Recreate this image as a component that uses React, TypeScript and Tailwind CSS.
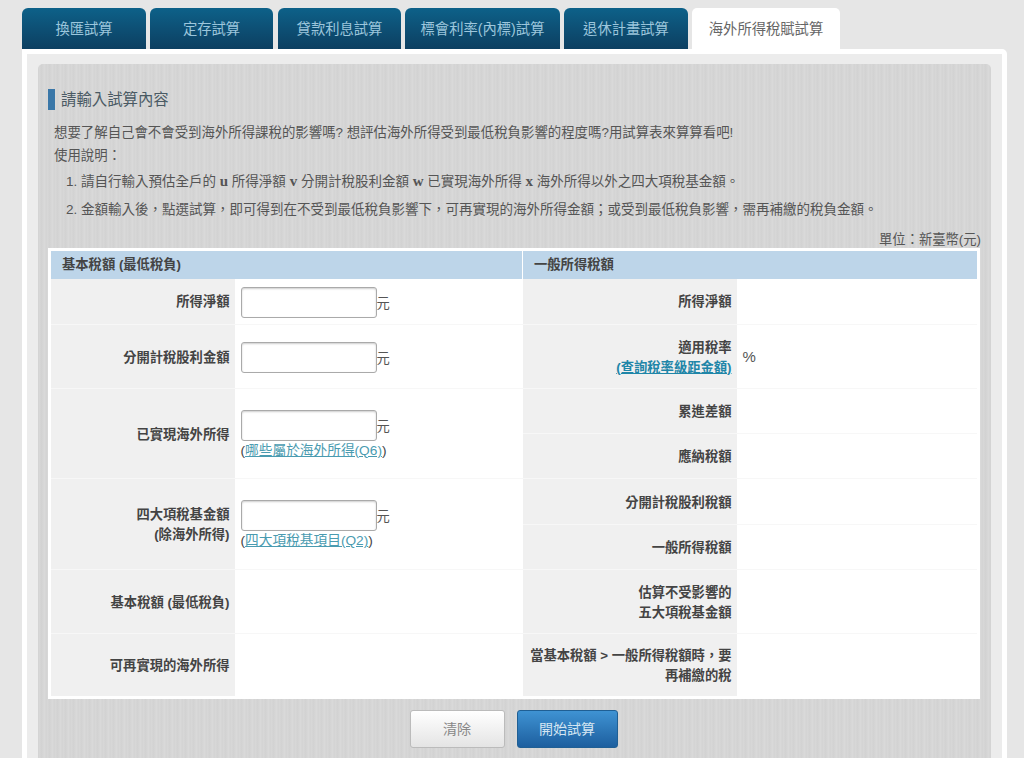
const FONT = "font-['Liberation_Sans','Noto_Sans_CJK_TC',sans-serif]";

const tabs = [
  { label: "換匯試算", width: "w-[124px]" },
  { label: "定存試算", width: "w-[123px]" },
  { label: "貸款利息試算", width: "w-[123px] ml-[1px]" },
  { label: "標會利率(內標)試算", width: "w-[155px]" },
  { label: "退休計畫試算", width: "w-[124px]" },
];

function Label({ children, rowSpan }: { children: React.ReactNode; rowSpan?: number }) {
  return (
    <td rowSpan={rowSpan} className="border-b border-[#f7f7f7] bg-[#f0f0f0] pr-[5px] pt-[2px] text-right align-middle font-bold leading-[20px] text-[#444]">
      {children}
    </td>
  );
}

function Value({ children, rowSpan }: { children?: React.ReactNode; rowSpan?: number }) {
  return (
    <td rowSpan={rowSpan} className="border-b border-[#f7f7f7] bg-white pl-[6px] pt-[2px] align-middle text-[#555]">
      {children}
    </td>
  );
}

function Amount() {
  return (
    <div className="flex items-center">
      <input className="h-[31px] w-[136px] rounded-[3px] border border-[#aaa] bg-white shadow-[inset_0_1px_2px_rgba(0,0,0,0.2)]" />
      <span className="mt-[3px] text-[13.3px] leading-none text-[#555]">元</span>
    </div>
  );
}

function Note({ children }: { children: string }) {
  return (
    <div className="mt-[1px] text-[13.7px] leading-[18px] text-[#444]">
      (<a href="#" className="text-[#4a9bb0] underline">{children}</a>)
    </div>
  );
}

function Mark({ children }: { children: string }) {
  return <b className="font-['Liberation_Serif'] text-[15px]">{children}</b>;
}

export default function App() {
  return (
    <div className={`${FONT} h-[758px] overflow-hidden bg-[#e6e6e6] pl-[22px] pr-[17px] pt-[8px] text-[13.3px] text-[#555]`}>
      <div className="flex h-[41px] gap-[4px]">
        {tabs.map((tab) => (
          <div key={tab.label} className={`${tab.width} flex items-center justify-center rounded-t-[6px] bg-gradient-to-b from-[#0d6189] to-[#0c3f61] pt-[2px] text-[14.3px] text-[#9cc6dc]`}>
            {tab.label}
          </div>
        ))}
        <div className="flex w-[148px] items-center justify-center rounded-t-[5px] bg-white pt-[2px] text-[14.3px] text-[#666]">
          海外所得稅賦試算
        </div>
      </div>

      <div className="rounded-[5px] rounded-tl-none border-[5px] border-white bg-[#ececec] px-[11px] pt-[10px] pb-[20px]">
        <div className="rounded-[5px] bg-[#d5d5d5] bg-[repeating-linear-gradient(90deg,#d3d3d3_0px,#d8d8d8_2px,#d1d1d1_3px,#d6d6d6_5px,#dadada_7px,#d2d2d2_8px)] px-[10px] pb-[30px] pt-[25px]">
          <h2 className="mb-[11px] flex h-[21px] items-center border-l-[7px] border-[#3a77a8] pl-[6px] text-[15.4px] font-normal leading-none text-[#4a5a64]">
            請輸入試算內容
          </h2>
          <div className="pl-[6px] text-[13.42px] leading-[23px]">
            <p>想要了解自己會不會受到海外所得課稅的影響嗎? 想評估海外所得受到最低稅負影響的程度嗎?用試算表來算算看吧!</p>
            <p>使用說明：</p>
            <ol className="pl-[12px] text-[13.5px]">
              <li className="mt-[3px]">1. 請自行輸入預估全戶的 <Mark>u</Mark> 所得淨額 <Mark>v</Mark> 分開計稅股利金額 <Mark>w</Mark> 已實現海外所得 <Mark>x</Mark> 海外所得以外之四大項稅基金額。</li>
              <li className="mt-[5px]">2. 金額輸入後，點選試算，即可得到在不受到最低稅負影響下，可再實現的海外所得金額；或受到最低稅負影響，需再補繳的稅負金額。</li>
            </ol>
          </div>
          <p className="mt-[10px] text-right leading-[17px]">單位：新臺幣(元)</p>

          <table className="w-[932px] table-fixed border-collapse border-[3px] border-white bg-white">
            <colgroup>
              <col className="w-[185px]" />
              <col className="w-[288px]" />
              <col className="w-[214px]" />
              <col />
            </colgroup>
            <tbody>
              <tr className="h-[29px]">
                <th colSpan={2} className="border-r border-white bg-[#bdd5e9] pl-[11px] text-left font-bold text-[#444]">基本稅額 (最低稅負)</th>
                <th colSpan={2} className="bg-[#bdd5e9] pl-[11px] text-left font-bold text-[#444]">一般所得稅額</th>
              </tr>
              <tr className="h-[46px]">
                <Label>所得淨額</Label>
                <Value><Amount /></Value>
                <Label>所得淨額</Label>
                <Value />
              </tr>
              <tr className="h-[64px]">
                <Label>分開計稅股利金額</Label>
                <Value><Amount /></Value>
                <Label>適用稅率<br /><a href="#" className="text-[#1f86a8] underline">(查詢稅率級距金額)</a></Label>
                <Value><span className="text-[15px]">%</span></Value>
              </tr>
              <tr className="h-[45px]">
                <Label rowSpan={2}>已實現海外所得</Label>
                <Value rowSpan={2}><Amount /><Note>哪些屬於海外所得(Q6)</Note></Value>
                <Label>累進差額</Label>
                <Value />
              </tr>
              <tr className="h-[45px]">
                <Label>應納稅額</Label>
                <Value />
              </tr>
              <tr className="h-[46px]">
                <Label rowSpan={2}>四大項稅基金額<br />(除海外所得)</Label>
                <Value rowSpan={2}><Amount /><Note>四大項稅基項目(Q2)</Note></Value>
                <Label>分開計稅股利稅額</Label>
                <Value />
              </tr>
              <tr className="h-[45px]">
                <Label>一般所得稅額</Label>
                <Value />
              </tr>
              <tr className="h-[64px]">
                <Label>基本稅額 (最低稅負)</Label>
                <Value />
                <Label>估算不受影響的<br />五大項稅基金額</Label>
                <Value />
              </tr>
              <tr className="h-[64px]">
                <Label>可再實現的海外所得</Label>
                <Value />
                <Label>當基本稅額 &gt; 一般所得稅額時，要<br />再補繳的稅</Label>
                <Value />
              </tr>
            </tbody>
          </table>

          <div className="mt-[11px] flex justify-center gap-[12px] pr-[2px]">
            <button className="h-[38px] w-[95px] rounded-[3px] border border-[#bbb] bg-gradient-to-b from-white to-[#e4e4e4] text-[14px] text-[#888]">清除</button>
            <button className="h-[38px] w-[101px] rounded-[3px] border border-[#1f5f94] bg-gradient-to-b from-[#3f93d3] to-[#1d5f9f] text-[14px] text-[#d5e6f2]">開始試算</button>
          </div>
        </div>
      </div>
    </div>
  );
}
